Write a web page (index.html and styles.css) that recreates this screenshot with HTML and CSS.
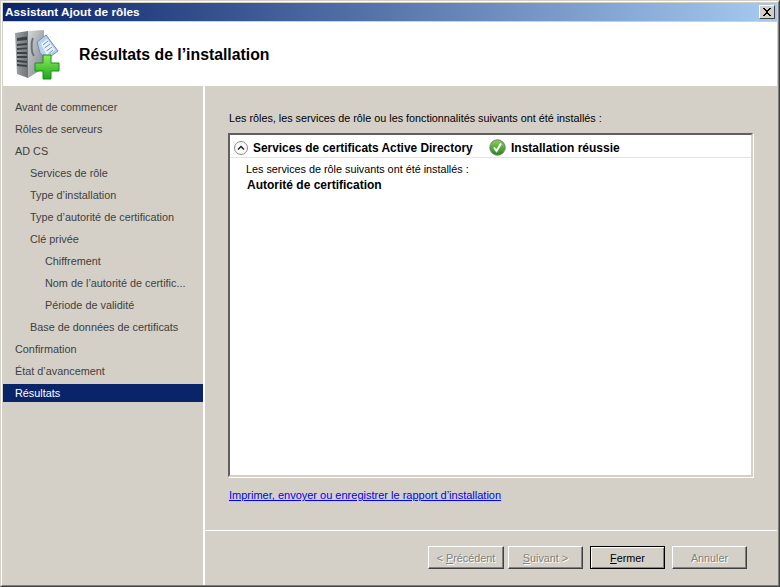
FILE: index.html
```html
<!DOCTYPE html>
<html lang="fr">
<head>
<meta charset="utf-8">
<title>Assistant Ajout de rôles</title>
<link rel="stylesheet" href="styles.css">
</head>
<body>
<div class="window">
  <div class="window-inner">
    <div class="titlebar">
      <span class="title">Assistant Ajout de rôles</span>
      <button class="close" aria-label="Fermer">
        <svg width="10" height="9" viewBox="0 0 10 9"><path d="M1 0h2v1h1v1h2V1h1V0h2v1H8v1H7v1H6v2h1v1h1v1h1v1H7V7H6V6H4v1H3v1H1V7h1V6h1V5h1V3H3V2H2V1H1z" fill="#000"/></svg>
      </button>
    </div>
    <header class="banner">
      <svg class="banner-icon" width="46" height="50" viewBox="0 0 46 50">
        <defs>
          <linearGradient id="front" x1="0" y1="0" x2="1" y2="0"><stop offset="0" stop-color="#9da2a6"/><stop offset="1" stop-color="#6e7478"/></linearGradient>
          <linearGradient id="side" x1="0" y1="0" x2="1" y2="1"><stop offset="0" stop-color="#d5d8da"/><stop offset="1" stop-color="#7c8186"/></linearGradient>
          <linearGradient id="plus" x1="0" y1="0" x2="0" y2="1"><stop offset="0" stop-color="#8fee5c"/><stop offset="1" stop-color="#1fa51c"/></linearGradient>
        </defs>
        <path d="M0 3 13 1 13 48 2 44Z" fill="url(#front)"/>
        <path d="M13 1 29 0 29 38 13 48Z" fill="url(#side)"/>
        <path d="M2 8 12 6.500V10L2 11ZM2 14 12 13V15L2 16ZM2 18 12 17.500V19L2 20ZM2 22 12 22V24L2 24ZM2 26 12 26V28L2 28ZM2 30 12 31V33L2 32ZM2 34 12 35V37L2 36Z" fill="#3c4145"/>
        <path d="M18 8C16 12 16 22 19 26" stroke="#6d7276" stroke-width="2" fill="none"/>
        <path d="M22 12 31 5 43 21 32 29 25 23Z" fill="#b4d2ee" stroke="#6f8eab"/>
        <path d="M26 14 32 9 40 20 32 26Z" fill="#eaf3fb"/>
        <path d="M28 15 33 11M29.500 18 35 14M31.500 21 37 17M33.500 24 38 20" stroke="#6d94bd"/>
        <path d="M28 25H36V33H44V41H36V49H28V41H20V33H28Z" fill="url(#plus)" stroke="#189018"/>
      </svg>
      <h1>Résultats de l’installation</h1>
    </header>
    <div class="body">
      <nav class="sidebar">
        <div class="step">Avant de commencer</div>
        <div class="step">Rôles de serveurs</div>
        <div class="step">AD CS</div>
        <div class="step sub">Services de rôle</div>
        <div class="step sub">Type d’installation</div>
        <div class="step sub">Type d’autorité de certification</div>
        <div class="step sub">Clé privée</div>
        <div class="step subsub">Chiffrement</div>
        <div class="step subsub">Nom de l’autorité de certific...</div>
        <div class="step subsub">Période de validité</div>
        <div class="step sub">Base de données de certificats</div>
        <div class="step">Confirmation</div>
        <div class="step">État d’avancement</div>
        <div class="step current">Résultats</div>
      </nav>
      <main class="panel">
        <div class="content">
          <p class="intro">Les rôles, les services de rôle ou les fonctionnalités suivants ont été installés :</p>
          <div class="results">
            <div class="result-head">
              <svg class="chevron" width="16" height="16" viewBox="0 0 16 16">
                <circle cx="8" cy="8" r="6.500" fill="#fafafa" stroke="#8a8a8a"/>
                <path d="M5 9.500 8 6.500 11 9.500" fill="none" stroke="#222" stroke-width="1.500"/>
              </svg>
              <span class="role-name">Services de certificats Active Directory</span>
              <svg class="check" width="17" height="17" viewBox="0 0 17 17">
                <defs><linearGradient id="ok" x1="0" y1="0" x2="0" y2="1"><stop offset="0" stop-color="#8ed05e"/><stop offset="1" stop-color="#218a16"/></linearGradient></defs>
                <circle cx="8.500" cy="8.500" r="7.700" fill="url(#ok)" stroke="#6f7a6c"/>
                <path d="M5 8.500 7.500 12 12 4.500" fill="none" stroke="#fff" stroke-width="2"/>
              </svg>
              <span class="status">Installation réussie</span>
            </div>
            <div class="result-body">
              <p class="result-text">Les services de rôle suivants ont été installés :</p>
              <p class="result-role">Autorité de certification</p>
            </div>
          </div>
          <a class="report" href="#">Imprimer, envoyer ou enregistrer le rapport d’installation</a>
        </div>
        <footer class="actions">
          <button class="btn btn-prev" disabled>&lt; <u>P</u>récédent</button>
          <button class="btn btn-next" disabled><u>S</u>uivant &gt;</button>
          <button class="btn btn-default"><u>F</u>ermer</button>
          <button class="btn" disabled>Annuler</button>
        </footer>
      </main>
    </div>
  </div>
</div>
</body>
</html>
```
FILE: styles.css
```css
html, body {
  margin: 0;
  padding: 0;
  height: 100%;
  overflow: hidden;
}
body {
  font-family: "Liberation Sans", Arial, sans-serif;
  font-size: 10.8px;
  color: #000;
  background: #d4d0c8;
}
.window {
  box-sizing: border-box;
  width: 780px;
  height: 587px;
  border: 1px solid;
  border-color: #d4d0c8 #404040 #404040 #d4d0c8;
}
.window-inner {
  box-sizing: border-box;
  height: 100%;
  border: 1px solid;
  border-color: #fff #808080 #808080 #fff;
  padding: 1px 1px 0 1px;
  display: flex;
  flex-direction: column;
}
.titlebar {
  flex: none;
  height: 18px;
  padding: 0 2px;
  display: flex;
  align-items: center;
  justify-content: space-between;
  background: linear-gradient(90deg, #0a246a, #a6caf0);
}
.title {
  color: #fff;
  font-weight: bold;
  font-size: 11.8px;
}
.close {
  box-sizing: border-box;
  width: 16px;
  height: 14px;
  padding: 0;
  display: flex;
  align-items: center;
  justify-content: center;
  background: #d4d0c8;
  border: 1px solid;
  border-color: #fff #404040 #404040 #fff;
}
.banner {
  flex: none;
  height: 64px;
  margin-top: 1px;
  background: #fff;
  display: flex;
  align-items: center;
  gap: 18px;
  padding-left: 12px;
}
.banner-icon {
  flex: none;
  margin-top: 2px;
}
.banner h1 {
  margin: 2px 0 0;
  font-size: 15.8px;
  font-weight: bold;
}
.body {
  flex: 1;
  display: flex;
  min-height: 0;
}
.sidebar {
  box-sizing: border-box;
  flex: none;
  width: 202px;
  border-right: 2px solid #fff;
  padding-top: 12px;
  display: flex;
  flex-direction: column;
  gap: 4px;
  font-size: 10.85px;
}
.step {
  height: 18px;
  line-height: 18px;
  padding-left: 12px;
  color: #404040;
  white-space: nowrap;
}
.step.sub { padding-left: 27px; }
.step.subsub { padding-left: 42px; }
.step.current {
  background: #0a246a;
  color: #fff;
}
.panel {
  flex: 1;
  min-width: 0;
  display: flex;
  flex-direction: column;
}
.content {
  flex: 1;
  min-height: 0;
  padding: 24px 24px 0 23px;
  display: flex;
  flex-direction: column;
  border-bottom: 1px solid #fff;
}
.intro {
  margin: 0 0 7px 1px;
  line-height: 16px;
  white-space: nowrap;
}
.results {
  box-sizing: border-box;
  height: 344px;
  background: #fff;
  border: 2px solid;
  border-color: #5f5f5f #d4d0c8 #d4d0c8 #5f5f5f;
  box-shadow: 1px 1px 0 #fff;
}
.result-head {
  box-sizing: border-box;
  height: 23px;
  padding: 3px 0 0 3px;
  display: flex;
  align-items: center;
  border-bottom: 1px solid #d6e6f6;
}
.chevron { flex: none; }
.role-name {
  margin-left: 4px;
  font-weight: bold;
  font-size: 11.9px;
  width: 236px;
}
.check { flex: none; }
.status {
  margin-left: 5px;
  font-weight: bold;
  font-size: 12px;
}
.result-body {
  padding: 3px 0 0 16px;
}
.result-text {
  margin: 0;
  line-height: 16px;
}
.result-role {
  margin: 0 0 0 1px;
  font-weight: bold;
  font-size: 12px;
  line-height: 16px;
}
.report {
  margin: 10px 0 0 1px;
  line-height: 16px;
  color: #0000ff;
  font-size: 11px;
  white-space: nowrap;
}
.actions {
  flex: none;
  height: 54px;
  box-sizing: border-box;
  padding: 15px 30px 0 0;
  display: flex;
  justify-content: flex-end;
  align-items: flex-start;
  gap: 7px;
}
.btn {
  box-sizing: border-box;
  width: 75px;
  height: 23px;
  padding: 0;
  font: inherit;
  color: #000;
  background: #d4d0c8;
  border: 1px solid;
  border-color: #fff #404040 #404040 #fff;
  box-shadow: inset -1px -1px 0 #808080;
}
.btn:disabled {
  color: #808080;
  text-shadow: 1px 1px 0 #fff;
}
.btn-prev { width: 76px; }
.btn-next { margin-left: -3px; }
.btn-default {
  border: 1px solid #000;
  box-shadow: inset 1px 1px 0 #fff, inset -1px -1px 0 #808080;
}
```
